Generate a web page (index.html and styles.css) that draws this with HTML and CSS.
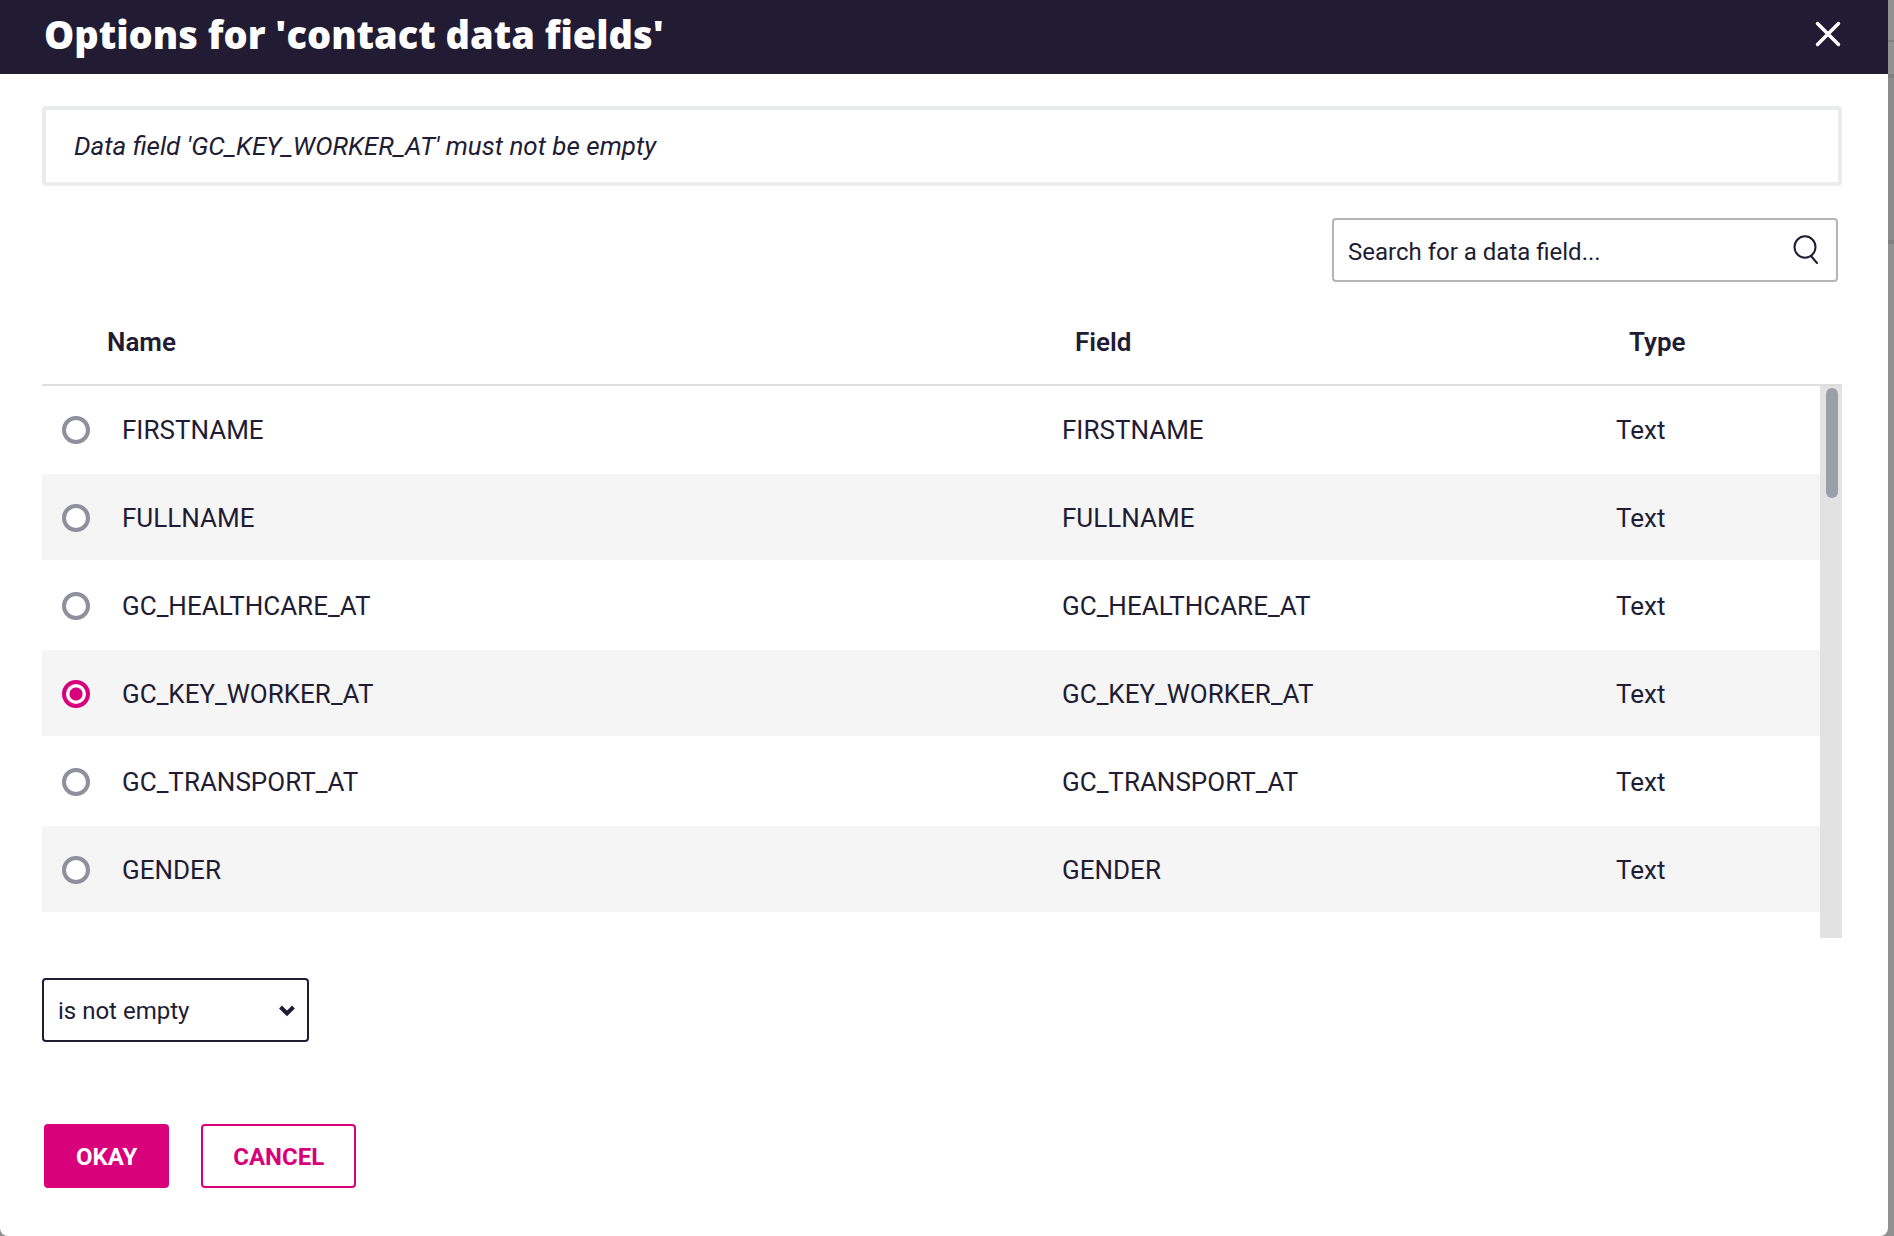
FILE: index.html
```html
<!DOCTYPE html>
<html lang="en">
<head>
    <meta charset="utf-8">
    <meta name="viewport" content="width=device-width, initial-scale=1">
    <title>Options for 'contact data fields'</title>
    <link rel="stylesheet" href="styles.css">
</head>
<body>
    <div class="dialog" role="dialog" aria-labelledby="dialogTitle">
        <header class="dialog-header">
            <h1 class="dialog-title" id="dialogTitle">Options for 'contact data fields'</h1>
            <button class="close-button" type="button" aria-label="Close">
                <svg width="26" height="26" viewBox="0 0 26 26">
                    <path d="M2.500 2.500L23.500 23.500M23.500 2.500L2.500 23.500" fill="none" stroke="#fff" stroke-width="3.500" stroke-linecap="round"/>
                </svg>
            </button>
        </header>

        <form class="dialog-body">
            <p class="summary">Data field 'GC_KEY_WORKER_AT' must not be empty</p>

            <!-- Search -->
            <div class="search">
                <input class="search-input" type="text" placeholder="Search for a data field..." aria-label="Search for a data field">
                <svg class="search-icon" width="26" height="30" viewBox="0 0 26 30">
                    <ellipse cx="12" cy="12" rx="10.5" ry="10.7" fill="none" stroke="#211c33" stroke-width="2"/>
                    <path d="M18 21L24 28" fill="none" stroke="#211c33" stroke-width="2" stroke-linecap="round"/>
                </svg>
            </div>

            <!-- Data fields -->
            <div class="field-list">
                <table class="field-table">
                    <colgroup>
                        <col class="col-radio">
                        <col>
                        <col class="col-field">
                        <col class="col-type">
                    </colgroup>
                    <thead>
                        <tr>
                            <td></td>
                            <th class="th-name">Name</th>
                            <th>Field</th>
                            <th>Type</th>
                        </tr>
                    </thead>
                    <tbody>
                        <tr>
                            <td class="radio-cell"><input type="radio" name="field" id="firstname"></td>
                            <td><label for="firstname">FIRSTNAME</label></td>
                            <td>FIRSTNAME</td>
                            <td>Text</td>
                        </tr>
                        <tr>
                            <td class="radio-cell"><input type="radio" name="field" id="fullname"></td>
                            <td><label for="fullname">FULLNAME</label></td>
                            <td>FULLNAME</td>
                            <td>Text</td>
                        </tr>
                        <tr>
                            <td class="radio-cell"><input type="radio" name="field" id="healthcare"></td>
                            <td><label for="healthcare">GC_HEALTHCARE_AT</label></td>
                            <td>GC_HEALTHCARE_AT</td>
                            <td>Text</td>
                        </tr>
                        <tr>
                            <td class="radio-cell"><input type="radio" name="field" id="keyworker" checked></td>
                            <td><label for="keyworker">GC_KEY_WORKER_AT</label></td>
                            <td>GC_KEY_WORKER_AT</td>
                            <td>Text</td>
                        </tr>
                        <tr>
                            <td class="radio-cell"><input type="radio" name="field" id="transport"></td>
                            <td><label for="transport">GC_TRANSPORT_AT</label></td>
                            <td>GC_TRANSPORT_AT</td>
                            <td>Text</td>
                        </tr>
                        <tr>
                            <td class="radio-cell"><input type="radio" name="field" id="gender"></td>
                            <td><label for="gender">GENDER</label></td>
                            <td>GENDER</td>
                            <td>Text</td>
                        </tr>
                    </tbody>
                </table>
                <div class="scrollbar"><div class="scrollbar-thumb"></div></div>
            </div>

            <!-- Condition -->
            <div class="condition">
                <select class="condition-select" aria-label="Condition">
                    <option>is not empty</option>
                    <option>is empty</option>
                </select>
                <svg class="condition-arrow" width="16" height="12" viewBox="0 0 16 12">
                    <path d="M1.5 2L8 8.5L14.5 2" fill="none" stroke="#211c33" stroke-width="4"/>
                </svg>
            </div>

            <div class="actions">
                <button class="button button-primary" type="submit">OKAY</button>
                <button class="button" type="button">CANCEL</button>
            </div>
        </form>
    </div>
</body>
</html>
```
FILE: styles.css
```css
* {
    box-sizing: border-box;
}

body {
    margin: 0;
    min-height: 100vh;
    padding-right: 6px;
    display: flex;
    /* dimmed page behind the dialog */
    background: linear-gradient(#919191 40px, #7f7f7f 40px 42px, #919191 42px 74px, #808080 74px 78px, #8c8c8c 78px 240px, #808080 240px 244px, #919191 244px);
    color: #211c33;
    font-family: Roboto, sans-serif;
    font-size: 26px;
    line-height: 30px;
}

.dialog {
    flex: 1;
    background-color: #fff;
    border-radius: 0 0 8px 8px;
}

.dialog-header {
    display: flex;
    justify-content: space-between;
    align-items: center;
    height: 74px;
    padding: 0 44px 6px;
    background-color: #211c33;
    color: #fff;
}

.dialog-title {
    margin: 0;
    font-family: "Open Sans", sans-serif;
    font-size: 38px;
    font-weight: 800;
    line-height: 48px;
}

.close-button {
    display: flex;
    padding: 3px;
    border: 0;
    background: none;
    cursor: pointer;
}

.dialog-body {
    padding: 32px 46px 48px 42px;
}

.summary {
    margin: 0 0 32px;
    padding: 21px 28px;
    border: 4px solid #e9ecea;
    border-radius: 4px;
    font-style: italic;
}

/* Search */

.search {
    position: relative;
    width: 506px;
    margin: 0 4px 0 auto;
}

.search-input {
    display: block;
    width: 100%;
    height: 64px;
    padding: 3px 56px 0 14px;
    border: 2px solid #b5b5b5;
    border-radius: 4px;
    color: #211c33;
    font-family: inherit;
    font-size: 24px;
}

.search-input::placeholder {
    color: #211c33;
    opacity: 1;
}

.search-icon {
    position: absolute;
    top: 17px;
    right: 19px;
}

/* Data fields */

.field-list {
    position: relative;
    padding-bottom: 24px;
}

.field-table {
    width: 100%;
    table-layout: fixed;
    border-collapse: separate;
    border-spacing: 0;
}

.col-radio {
    width: 60px;
}

.col-field {
    width: 554px;
}

.col-type {
    width: 246px;
}

.field-table td {
    padding: 2px 20px 0;
}

.field-table thead td,
.field-table th {
    height: 104px;
    padding: 18px 33px 0;
    border-bottom: 2px solid #dedede;
    font-weight: 600;
    text-align: left;
}

.field-table .th-name {
    padding-left: 5px;
}

.field-table tbody td {
    height: 88px;
    border-bottom: 2px solid #fff;
}

.field-table tbody tr:nth-child(even) {
    background-color: #f5f5f5;
}

.radio-cell input {
    appearance: none;
    display: block;
    width: 28px;
    height: 28px;
    margin: 0;
    border: 4px solid #8f8f9d;
    border-radius: 50%;
    background-color: #fff;
}

.radio-cell input:checked {
    border-color: #d9007b;
    background: radial-gradient(circle, #d9007b 6px, #fff 7px);
}

.scrollbar {
    position: absolute;
    top: 104px;
    right: 0;
    bottom: 0;
    width: 22px;
    padding: 2px 4px 0 6px;
    background-color: #e2e2e2;
}

.scrollbar-thumb {
    height: 20%;
    border-radius: 6px;
    background-color: #9b9fa8;
}

/* Condition */

.condition {
    position: relative;
    width: 267px;
    margin: 40px 0 82px;
}

.condition-select {
    appearance: none;
    display: block;
    width: 100%;
    height: 64px;
    padding: 2px 40px 0 14px;
    border: 2px solid #211c33;
    border-radius: 4px;
    background-color: #fff;
    color: #211c33;
    font-family: inherit;
    font-size: 24px;
}

.condition-arrow {
    position: absolute;
    top: 27px;
    right: 14px;
    pointer-events: none;
}

.actions {
    display: flex;
    gap: 32px;
    padding-left: 2px;
}

.button {
    height: 64px;
    padding: 2px 30px 0;
    border: 2px solid #d9007b;
    border-radius: 4px;
    background-color: #fff;
    color: #d9007b;
    font-family: inherit;
    font-size: 24px;
    font-weight: 700;
    cursor: pointer;
}

.button-primary {
    background-color: #d9007b;
    color: #fff;
}
```
